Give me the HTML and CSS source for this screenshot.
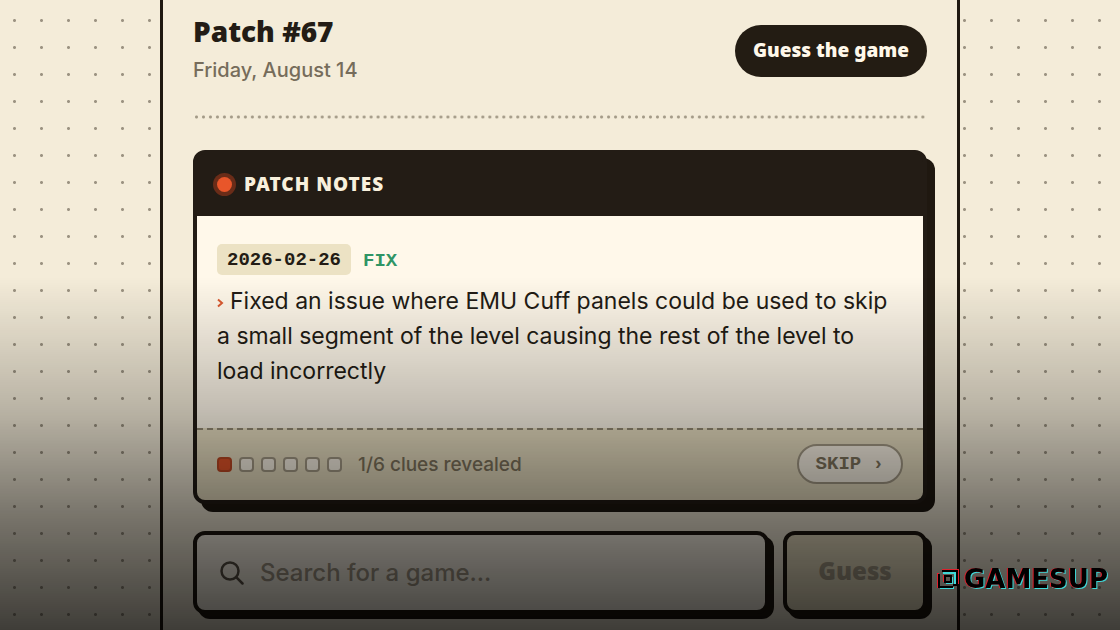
FILE: index.html
```html
<!DOCTYPE html>
<html lang="en">
<head>
  <meta charset="UTF-8" />
  <meta name="viewport" content="width=device-width, initial-scale=1.0"/>
  <title>Patch #67</title>
  <link rel="stylesheet" href="styles.css">
</head>
<body>

  <div class="page">
    <div class="dots"></div>

    <main class="column">
      <header class="top">
        <div>
          <h1>Patch #67</h1>
          <p class="date">Friday, August 14</p>
        </div>
        <button class="pill" type="button">Guess the game</button>
      </header>

      <!-- Patch notes card -->
      <section class="card">
        <div class="card-head">
          <span class="lamp"></span>
          <h2>PATCH NOTES</h2>
        </div>

        <div class="card-body">
          <div class="meta">
            <time class="stamp" datetime="2026-02-26">2026-02-26</time>
            <span class="kind">FIX</span>
          </div>
          <p class="note"><svg class="mark" viewBox="0 0 8 12" aria-hidden="true"><path d="M1 2.5 5 6 1 9.5"/></svg>Fixed an issue where EMU Cuff panels could be used to skip a small segment of the level causing the rest of the level to load incorrectly</p>
        </div>

        <div class="card-foot">
          <div class="clues">
            <span class="clue on"></span>
            <span class="clue"></span>
            <span class="clue"></span>
            <span class="clue"></span>
            <span class="clue"></span>
            <span class="clue"></span>
          </div>
          <span class="count">1/6 clues revealed</span>
          <button class="skip" type="button">SKIP <span>›</span></button>
        </div>
      </section>

      <!-- Guess form -->
      <form class="guess">
        <label class="search">
          <svg viewBox="0 0 24 24" aria-hidden="true"><circle cx="10" cy="10" r="8.5"/><path d="M16.2 16.2 22.5 22.5"/></svg>
          <input type="text" aria-label="Search for a game" placeholder="Search for a game...">
        </label>
        <button class="submit" type="button">Guess</button>
      </form>
    </main>

    <div class="dots"></div>
  </div>

  <div class="shade"></div>

  <div class="brand">
    <svg viewBox="0 0 22 20" aria-hidden="true">
      <path class="red" d="M1 4V18H5M5 1H21V15M7 6V13"/>
      <path class="cyan" d="M3 19H17M6 4H18V16M9 14H15V8"/>
      <path class="ink" d="M2 5V18H16M5 2H20V16H16M8 7H14V13H8Z"/>
    </svg>
    <span>GAMESUP</span>
  </div>

</body>
</html>
```

FILE: styles.css
```css
* {
  box-sizing: border-box;
}

html, body {
  margin: 0;
  padding: 0;
  height: 100%;
  overflow: hidden;
}

body {
  font-family: "Inter", sans-serif;
  color: #231c15;
  background-color: #f4ecd9;
}

h1, h2, p {
  margin: 0;
}

button, input {
  font: inherit;
  color: inherit;
}

button {
  cursor: pointer;
}

.page {
  display: grid;
  grid-template-columns: 1fr minmax(0, 800px) 1fr;
  min-height: 100%;
}

.dots {
  background-image: radial-gradient(circle, #9c9382 1px, transparent 2px);
  background-size: 27px 27px;
  background-position: 1px 7px;
}

.column + .dots {
  background-position: -9px 7px;
}

.column {
  border: solid #1f1810;
  border-width: 0 3px;
  padding: 13px 30px 0;
}

/* Header */
.top {
  display: flex;
  justify-content: space-between;
  align-items: flex-start;
  height: 106px;
  margin-bottom: 31px;
  background: radial-gradient(circle, #a39a87 1px, transparent 2px) 0 100% / 7px 4px;
  background-repeat: round no-repeat;
}

h1 {
  font-family: "Noto Sans", sans-serif;
  font-size: 28px;
  line-height: 36px;
  font-weight: 900;
}

.date {
  font-size: 20px;
  line-height: 42px;
  font-weight: 500;
  color: #766c5b;
}

.pill {
  margin-top: 12px;
  height: 52px;
  padding: 0 18px 2px;
  border: 0;
  border-radius: 26px;
  background: #231c13;
  color: #fff8ea;
  font-family: "Noto Sans", sans-serif;
  font-size: 19px;
  font-weight: 900;
}

/* Card */
.card {
  border: 4px solid #231c15;
  border-radius: 12px;
  background: #231c15;
  box-shadow: 8px 8px 0 #1f1810;
}

.card-head {
  display: flex;
  align-items: center;
  gap: 12px;
  height: 62px;
  padding: 0 20px 2px;
}

.lamp {
  width: 15px;
  height: 15px;
  border-radius: 50%;
  background: #e8562a;
  box-shadow: 0 0 0 4px #6a2c18;
}

h2 {
  font-family: "Noto Sans", sans-serif;
  font-size: 19px;
  font-weight: 900;
  letter-spacing: 1px;
  color: #f8f0dc;
}

.card-body {
  min-height: 212px;
  padding: 28px 20px;
  background: #fff8ea;
}

.meta {
  display: flex;
  align-items: center;
  gap: 12px;
  margin-bottom: 9px;
  font-family: "Liberation Mono", monospace;
  font-size: 19px;
  font-weight: 700;
}

.stamp {
  padding: 2px 10px 0;
  line-height: 29px;
  border-radius: 5px;
  background: #ece2c4;
}

.kind {
  padding-top: 2px;
  color: #2f9565;
}

.note {
  font-size: 23px;
  line-height: 35px;
}

.mark {
  width: 8px;
  height: 12px;
  margin-right: 5px;
  fill: none;
  stroke: #dc5a30;
  stroke-width: 2;
}

.card-foot {
  display: flex;
  align-items: center;
  gap: 16px;
  height: 72px;
  padding: 0 20px 2px;
  border-top: 2px dashed #948a74;
  border-radius: 0 0 8px 8px;
  background: #ece2c4;
}

.clues {
  display: flex;
  gap: 7px;
}

.clue {
  width: 15px;
  height: 15px;
  border: 2px solid #a79d88;
  border-radius: 4px;
  background: #fff8ea;
}

.clue.on {
  border-color: #c04a24;
  background: #e8562a;
}

.count {
  font-size: 19px;
  font-weight: 500;
  color: #82775f;
}

.skip {
  margin-left: auto;
  height: 40px;
  padding: 0 17px;
  border: 2px solid #a79d88;
  border-radius: 20px;
  background: #fff8ea;
  color: #82775f;
  font-family: "Liberation Mono", monospace;
  font-size: 19px;
  font-weight: 700;
}

/* Guess form */
.guess {
  display: flex;
  gap: 14px;
  margin-top: 27px;
}

.search, .submit {
  height: 83px;
  border: 4px solid #1f1810;
  border-radius: 12px;
  box-shadow: 5px 5px 0 #1f1810;
}

.search {
  flex: 1;
  display: flex;
  align-items: center;
  gap: 16px;
  padding: 0 23px;
  background: #fff8ea;
}

.search svg {
  width: 24px;
  height: 24px;
  fill: none;
  stroke: #5c5347;
  stroke-width: 2.5;
  stroke-linecap: round;
}

.search input {
  flex: 1;
  min-width: 0;
  border: 0;
  padding: 0;
  outline: none;
  background: none;
  font-size: 24px;
  font-weight: 500;
}

.search input::placeholder {
  color: #a39987;
  opacity: 1;
}

.submit {
  width: 144px;
  padding: 0 0 4px;
  background: #ece2c4;
  color: #a99f8a;
  font-family: "Noto Sans", sans-serif;
  font-size: 24px;
  font-weight: 900;
}

/* Fade over the lower half of the page */
.shade {
  position: fixed;
  inset: 0;
  background: linear-gradient(transparent 44%, rgba(0, 0, 0, 0.24) 65%, rgba(0, 0, 0, 0.51) 82%, rgba(0, 0, 0, 0.74));
  pointer-events: none;
}

.brand {
  position: fixed;
  right: 12px;
  bottom: 38px;
  display: flex;
  align-items: center;
  gap: 5px;
  font-family: "DejaVu Sans", sans-serif;
  font-size: 26px;
  line-height: 26px;
  font-weight: 700;
  color: #000;
  text-shadow: -1px 0 #e0202c, 1px 1px #3fd8d8;
}

.brand svg {
  width: 22px;
  height: 20px;
  fill: none;
  stroke-width: 2;
}

.red { stroke: #e0202c; }
.cyan { stroke: #3fd8d8; }
.ink { stroke: #000; }
```
